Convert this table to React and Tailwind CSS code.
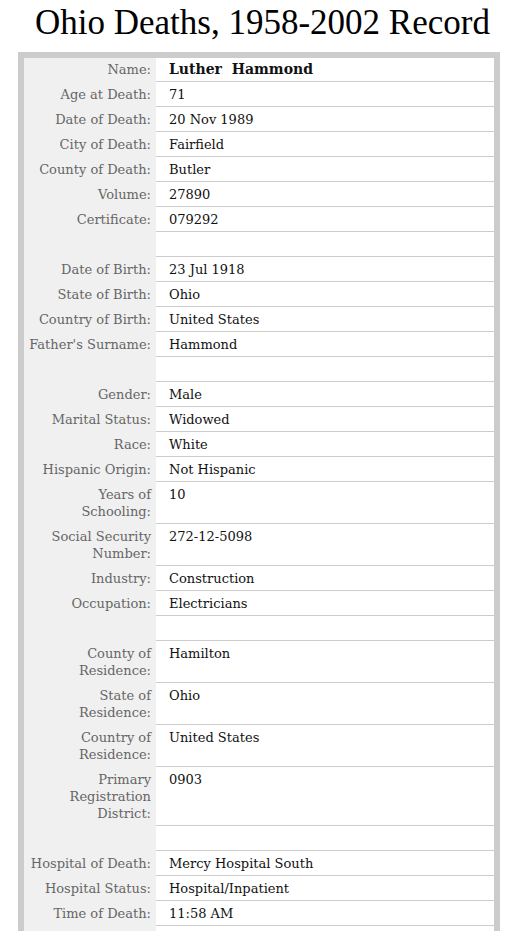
const rows = [
  { label: "Name:", value: "Luther\u00a0\u00a0Hammond", bold: true, first: true },
  { label: "Age at Death:", value: "71" },
  { label: "Date of Death:", value: "20 Nov 1989" },
  { label: "City of Death:", value: "Fairfield" },
  { label: "County of Death:", value: "Butler" },
  { label: "Volume:", value: "27890" },
  { label: "Certificate:", value: "079292" },
  { blank: true },
  { label: "Date of Birth:", value: "23 Jul 1918" },
  { label: "State of Birth:", value: "Ohio" },
  { label: "Country of Birth:", value: "United States" },
  { label: "Father's Surname:", value: "Hammond" },
  { blank: true },
  { label: "Gender:", value: "Male" },
  { label: "Marital Status:", value: "Widowed" },
  { label: "Race:", value: "White" },
  { label: "Hispanic Origin:", value: "Not Hispanic" },
  { label: ["Years of", "Schooling:"], value: "10" },
  { label: ["Social Security", "Number:"], value: "272-12-5098" },
  { label: "Industry:", value: "Construction" },
  { label: "Occupation:", value: "Electricians" },
  { blank: true },
  { label: ["County of", "Residence:"], value: "Hamilton" },
  { label: ["State of", "Residence:"], value: "Ohio" },
  { label: ["Country of", "Residence:"], value: "United States" },
  { label: ["Primary", "Registration", "District:"], value: "0903" },
  { blank: true },
  { label: "Hospital of Death:", value: "Mercy Hospital South" },
  { label: "Hospital Status:", value: "Hospital/Inpatient" },
  { label: "Time of Death:", value: "11:58 AM" },
  { label: "", value: "" },
];

function Row({ row }) {
  const lines = Array.isArray(row.label) ? row.label : [row.label || ""];
  return (
    <>
      <div className="bg-[#f0f0f0] text-right pr-[5px] text-[#666666]">
        <div className={row.first ? "pt-[3px] pb-[3px]" : "pt-[4px] pb-[4px]"}>
          {lines.map((l, i) => (
            <div key={i} className="h-[17px] leading-[17px] whitespace-nowrap">
              {l}
            </div>
          ))}
        </div>
      </div>
      <div
        className={
          "bg-white border-b border-[#cccccc] pl-[13px] text-[#111111] leading-[17px] " +
          (row.first ? "pt-[3px] pb-[3px]" : "pt-[4px] pb-[3px]") +
          (row.bold ? " font-bold text-[14px]" : "")
        }
      >
        {row.blank ? "\u00a0" : row.value}
      </div>
    </>
  );
}

export default function App() {
  return (
    <div className="bg-white min-h-screen w-[509px] overflow-hidden">
      <h1 className="h-[52px] pl-[35px] pt-[2px] text-[35px] leading-[41px] text-black font-['Liberation_Serif',serif] font-normal whitespace-nowrap">
        Ohio Deaths, 1958-2002 Record
      </h1>
      <div className="ml-[18px] w-[482px] border-[6px] border-b-0 border-[#cccccc] bg-[#f0f0f0]">
        <div className="grid grid-cols-[132px_338px] text-[13px] font-['DejaVu_Serif',serif]">
          {rows.map((r, i) => (
            <Row key={i} row={r} />
          ))}
        </div>
      </div>
    </div>
  );
}
